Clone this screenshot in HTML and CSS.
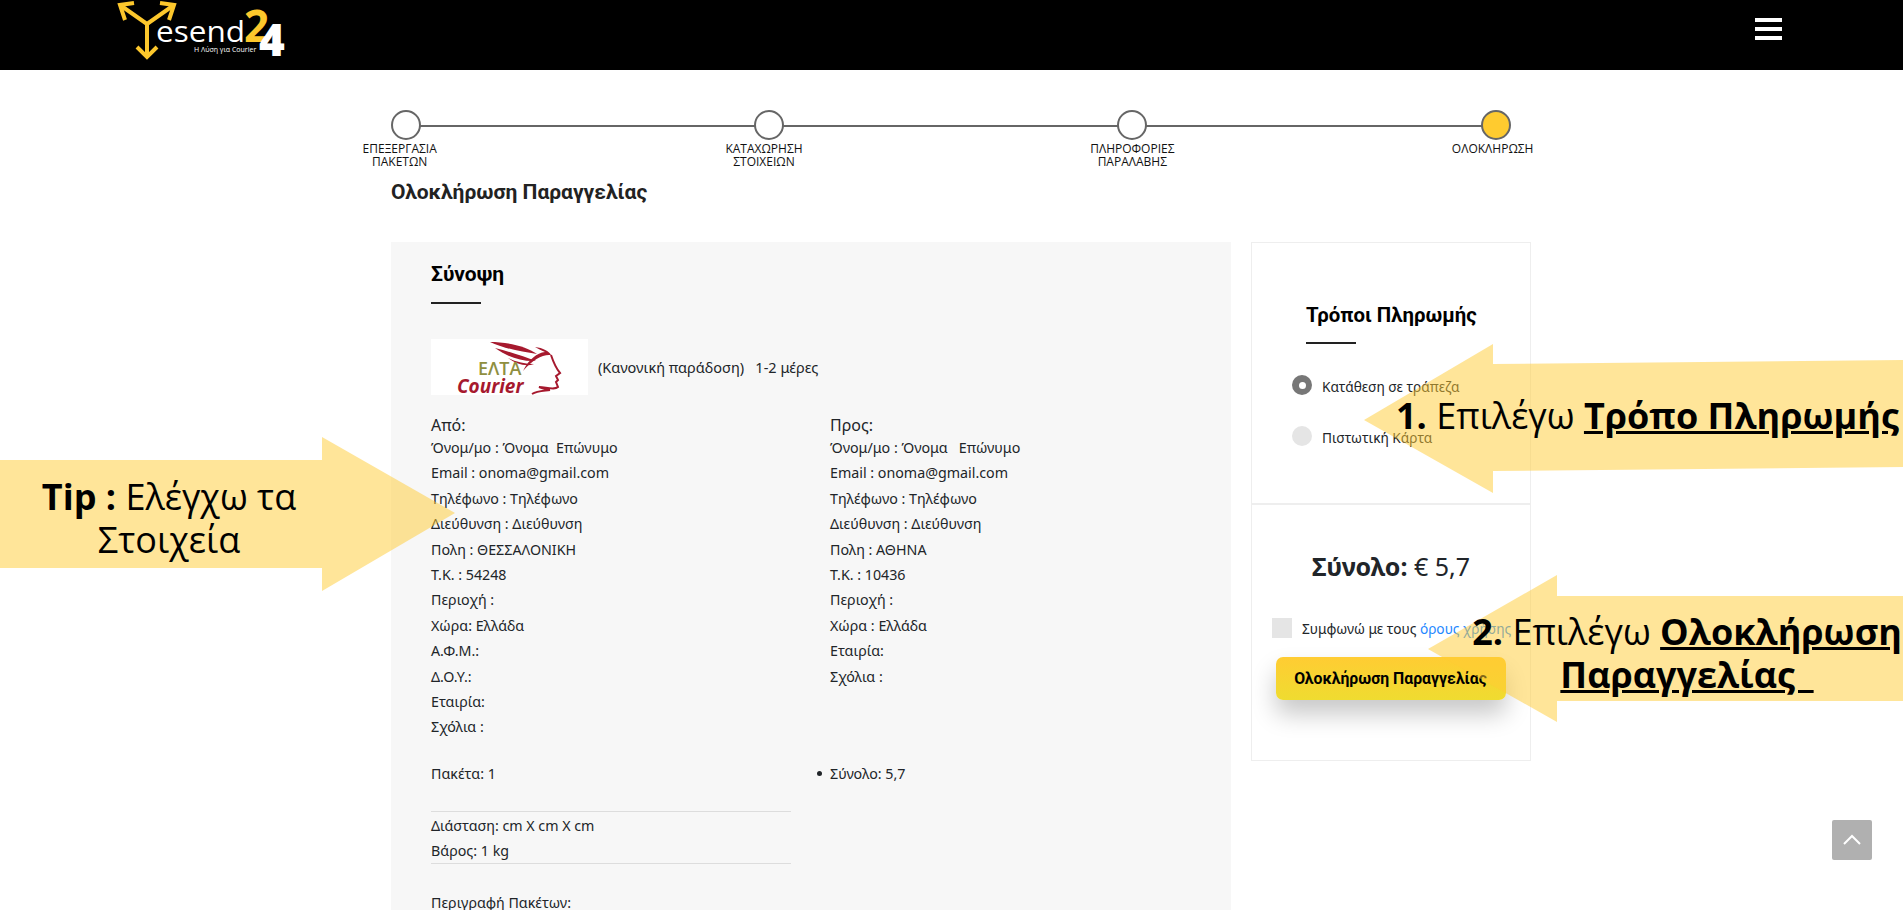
FILE: index.html
```html
<!DOCTYPE html>
<html lang="el">
<head>
  <meta charset="UTF-8">
  <meta name="viewport" content="width=device-width, initial-scale=1">
  <title>Yesend24 - Ολοκλήρωση Παραγγελίας</title>
  <link rel="stylesheet" href="styles.css">
</head>
<body>
  <div class="page">
    <header class="topbar">
      <svg class="logo" width="170" height="62" viewBox="0 0 170 62">
        <g fill="none" stroke="#fcc72c" stroke-width="4" stroke-linejoin="miter">
          <path d="M2 5 L29 24 L56 5"/>
          <path d="M29 24 V57"/>
          <path d="M16 3 L2 5 L7 20"/>
          <path d="M42 3 L56 5 L51 20"/>
          <path d="M19 47 L29 57 L39 47"/>
        </g>
        <text class="logo-esend" x="38" y="42" textLength="89" lengthAdjust="spacingAndGlyphs">esend</text>
        <text class="logo-two" x="126" y="42">2</text>
        <text class="logo-four" x="141" y="56">4</text>
        <text class="logo-tag" x="76" y="52">Η Λύση για Courier</text>
      </svg>
      <div class="burger"><span></span><span></span><span></span></div>
    </header>

    <ol class="stepper">
      <li class="step step-a"><span class="dot"></span><span class="step-label">ΕΠΕΞΕΡΓΑΣΙΑ<br>ΠΑΚΕΤΩΝ</span></li>
      <li class="step step-b"><span class="dot"></span><span class="step-label">ΚΑΤΑΧΩΡΗΣΗ<br>ΣΤΟΙΧΕΙΩΝ</span></li>
      <li class="step"><span class="dot"></span><span class="step-label">ΠΛΗΡΟΦΟΡΙΕΣ<br>ΠΑΡΑΛΑΒΗΣ</span></li>
      <li class="step step-d active"><span class="dot"></span><span class="step-label">ΟΛΟΚΛΗΡΩΣΗ</span></li>
    </ol>

    <div class="content">
      <h1 class="page-title">Ολοκλήρωση Παραγγελίας</h1>

      <div class="columns">
        <section class="summary">
          <h2 class="block-title">Σύνοψη</h2>
          <div class="rule"></div>

          <div class="carrier">
            <svg class="carrier-logo" width="157" height="56" viewBox="0 0 157 56">
              <rect width="157" height="56" fill="#fff"/>
              <path d="M59 3 C75 3 95 7 106 15 C90 13 72 9 59 3Z" fill="#a6192e"/>
              <path d="M64 9 C80 13 94 18 105 22 C90 23 75 17 64 9Z" fill="#a6192e"/>
              <path d="M77 19 C85 23 95 25 103 25 C95 28 85 25 77 19Z" fill="#a6192e"/>
              <path d="M104 8 C112 9 118 12 120 16 C112 15 102 20 92 32 C98 20 106 14 114 13 C110 11 107 10 104 8Z" fill="#a6192e"/>
              <path d="M120 16 C122 22 124 28 129 34 L125 37 L127 41 L125 43 L127 48 C124 51 118 49 108 48 C113 50 116 51 119 51 C112 52 106 52 101 55" fill="none" stroke="#a6192e" stroke-width="2"/>
              <text class="carrier-elta" x="47" y="36">ΕΛΤΑ</text>
              <text class="carrier-courier" x="26" y="54">Courier</text>
            </svg>
            <span class="carrier-text">(Κανονική παράδοση) &nbsp; 1-2 μέρες</span>
          </div>

          <div class="addresses">
            <div>
              <h3 class="addr-title">Από:</h3>
              <p class="row">Όνομ/μο : Όνομα &nbsp;Επώνυμο</p>
              <p class="row">Email : onoma@gmail.com</p>
              <p class="row">Τηλέφωνο : Τηλέφωνο</p>
              <p class="row">Διεύθυνση : Διεύθυνση</p>
              <p class="row">Πολη : ΘΕΣΣΑΛΟΝΙΚΗ</p>
              <p class="row">Τ.Κ. : 54248</p>
              <p class="row">Περιοχή :</p>
              <p class="row">Χώρα: Ελλάδα</p>
              <p class="row">Α.Φ.Μ.:</p>
              <p class="row">Δ.Ο.Υ.:</p>
              <p class="row">Εταιρία:</p>
              <p class="row">Σχόλια :</p>
            </div>
            <div>
              <h3 class="addr-title">Προς:</h3>
              <p class="row">Όνομ/μο : Όνομα &nbsp; Επώνυμο</p>
              <p class="row">Email : onoma@gmail.com</p>
              <p class="row">Τηλέφωνο : Τηλέφωνο</p>
              <p class="row">Διεύθυνση : Διεύθυνση</p>
              <p class="row">Πολη : ΑΘΗΝΑ</p>
              <p class="row">Τ.Κ. : 10436</p>
              <p class="row">Περιοχή :</p>
              <p class="row">Χώρα : Ελλάδα</p>
              <p class="row">Εταιρία:</p>
              <p class="row">Σχόλια :</p>
            </div>
          </div>

          <div class="packages">
            <p class="line">Πακέτα: 1</p>
            <ul class="totals"><li class="line">Σύνολο: 5,7</li></ul>
          </div>

          <div class="package-info">
            <p class="line">Διάσταση: cm X cm X cm</p>
            <p class="line">Βάρος: 1 kg</p>
          </div>

          <p class="line package-desc">Περιγραφή Πακέτων:</p>
        </section>

        <aside class="side">
          <div class="pay">
            <h2 class="block-title">Τρόποι Πληρωμής</h2>
            <div class="rule"></div>
            <div class="options">
              <label class="option"><span class="radio checked"></span><span class="option-text">Κατάθεση σε τράπεζα</span></label>
              <label class="option"><span class="radio"></span><span class="option-text">Πιστωτική Κάρτα</span></label>
            </div>
          </div>
          <div class="checkout">
            <p class="grand"><b>Σύνολο:</b> € 5,7</p>
            <label class="terms"><span class="checkbox"></span><span>Συμφωνώ με τους <a href="#">όρους χρήσης</a></span></label>
            <button class="order-btn" type="button">Ολοκλήρωση Παραγγελίας</button>
          </div>
        </aside>
      </div>
    </div>

    <!-- arrows drawn over the page -->
    <svg class="arrows" width="1903" height="910" viewBox="0 0 1903 910">
      <polygon points="0,460 322,460 322,437 455,513 322,591 322,568 0,568"/>
      <polygon points="1364,420 1493,344 1493,364 1903,360 1903,467 1493,471 1493,493"/>
      <polygon points="1428,649 1557,575 1557,596 1903,596 1903,701 1557,701 1557,722"/>
    </svg>
    <div class="note note-tip"><b>Tip :</b> Ελέγχω τα Στοιχεία</div>
    <div class="note note-pay"><b>1.</b> Επιλέγω <b><u>Τρόπο Πληρωμής</u></b></div>
    <div class="note note-order"><b>2.</b> Επιλέγω <b><u>Ολοκλήρωση Παραγγελίας&nbsp;&nbsp;</u></b></div>

    <a class="to-top" href="#">
      <svg width="20" height="12" viewBox="0 0 20 12"><path d="M2 10 L10 2 L18 10" fill="none" stroke="#fff" stroke-width="2"/></svg>
    </a>
  </div>
</body>
</html>
```

FILE: styles.css
```css
html, body {
  margin: 0;
  padding: 0;
  background-color: #fff;
  color: #212529;
  font-family: 'Noto Sans', 'Open Sans', sans-serif;
  font-size: 14.25px;
}

.page {
  position: relative;
  height: 910px;
  overflow: hidden;
}

p, h1, h2, h3, ul, ol {
  margin: 0;
  padding: 0;
}

/* header */
.topbar {
  display: flex;
  justify-content: space-between;
  align-items: flex-start;
  height: 70px;
  padding: 0 121px 0 118px;
  background-color: #000;
}

.logo {
  display: block;
  overflow: visible;
}

.logo-esend {
  fill: #fff;
  font-family: 'Open Sans', sans-serif;
  font-size: 30px;
  font-weight: 400;
}

.logo-two {
  fill: #fcc72c;
  font-family: 'Open Sans', sans-serif;
  font-size: 44px;
  font-weight: 700;
}

.logo-four {
  fill: #fff;
  font-family: 'Open Sans', sans-serif;
  font-size: 44px;
  font-weight: 800;
}

.logo-tag {
  fill: #fff;
  font-family: 'Open Sans', sans-serif;
  font-size: 7px;
}

.burger {
  display: flex;
  flex-direction: column;
  gap: 5px;
  width: 27px;
  padding-top: 18px;
}

.burger span {
  height: 4px;
  background-color: #fff;
}

/* steps */
.stepper {
  position: relative;
  display: grid;
  grid-template-columns: repeat(4, 363.33px);
  width: 1453.33px;
  margin: 40px 0 0 224px;
  list-style: none;
}

.stepper::before {
  content: '';
  position: absolute;
  top: 15px;
  left: 182px;
  right: 182px;
  height: 2px;
  background-color: #666;
}

.step {
  position: relative;
  display: flex;
  flex-direction: column;
  align-items: center;
  height: 59px;
}

.dot {
  box-sizing: border-box;
  width: 30px;
  height: 30px;
  border: 2px solid #666;
  border-radius: 50%;
  background-color: #fff;
}

.active .dot {
  background-color: #ffcb2f;
}

.step-label {
  margin-top: 2px;
  font-family: 'Open Sans', sans-serif;
  font-size: 12px;
  line-height: 13px;
  text-align: center;
  color: #111;
}

.step-a .step-label { margin-right: 12px; }
.step-b .step-label { margin-right: 10px; }
.step-d .step-label { margin-right: 6px; }

/* content */
.content {
  width: 1140px;
  margin: 10px 0 0 391px;
}

.page-title {
  font-family: Roboto, sans-serif;
  font-size: 21px;
  font-weight: 700;
  line-height: 26px;
  color: #222;
}

.columns {
  display: flex;
  gap: 20px;
  align-items: flex-start;
  margin-top: 37px;
}

.block-title {
  font-family: Roboto, sans-serif;
  font-size: 21px;
  font-weight: 700;
  line-height: 24px;
  color: #000;
}

.rule {
  width: 50px;
  height: 2px;
  margin-top: 15px;
  background-color: #222;
}

.summary {
  box-sizing: border-box;
  width: 840px;
  height: 800px;
  padding: 20px 40px 0;
  background-color: #f7f7f7;
}

.summary .rule {
  margin-top: 16px;
}

.carrier {
  display: flex;
  align-items: center;
  gap: 10px;
  margin-top: 35px;
}

.carrier-logo {
  display: block;
}

.carrier-elta {
  fill: #8f8f3f;
  font-family: 'Open Sans', sans-serif;
  font-size: 18px;
  font-weight: 600;
}

.carrier-courier {
  fill: #a6192e;
  font-family: 'Open Sans', sans-serif;
  font-size: 19px;
  font-style: italic;
  font-weight: 700;
}

.carrier-text {
  font-size: 14.5px;
}

.addresses {
  display: grid;
  grid-template-columns: 399px 1fr;
  margin-top: 21px;
}

.addr-title {
  font-size: 16px;
  font-weight: 400;
  line-height: 19px;
}

.row {
  line-height: 25.4px;
}

.line {
  line-height: 25px;
}

.packages {
  display: grid;
  grid-template-columns: 399px 1fr;
  margin-top: 21px;
}

.totals {
  margin-left: -13px;
  list-style: none;
}

.totals li {
  display: flex;
  align-items: center;
  gap: 8px;
}

.totals li::before {
  content: '';
  width: 5px;
  height: 5px;
  border-radius: 50%;
  background-color: #212529;
}

.package-info {
  width: 360px;
  margin-top: 25px;
  padding-top: 1px;
  border-top: 1px solid #ddd;
  border-bottom: 1px solid #ddd;
}

.package-desc {
  margin-top: 26px;
}

/* right column */
.side {
  box-sizing: border-box;
  width: 280px;
  border: 1px solid #eee;
}

.pay {
  height: 262px;
  padding: 60px 0 0 54px;
  box-sizing: border-box;
  border-bottom: 2px solid #eee;
}

.pay .block-title {
  font-size: 20.4px;
}

.options {
  display: flex;
  flex-direction: column;
  gap: 29px;
  margin: 30px 0 0 -14px;
}

.option {
  display: flex;
  align-items: center;
  gap: 10px;
  font-size: 13.7px;
}

.option-text {
  padding-top: 3px;
}

.radio {
  display: flex;
  align-items: center;
  justify-content: center;
  width: 20px;
  height: 20px;
  border-radius: 50%;
  background-color: #e5e5e5;
}

.radio.checked {
  background-color: #777;
}

.radio.checked::after {
  content: '';
  width: 7px;
  height: 7px;
  border-radius: 50%;
  background-color: #fff;
}

.checkout {
  padding: 45px 0 60px 20px;
}

.grand {
  padding-right: 20px;
  font-size: 25px;
  line-height: 32px;
  text-align: center;
}

.terms {
  display: flex;
  align-items: center;
  gap: 10px;
  margin-top: 36px;
  font-size: 13.7px;
}

.terms a {
  color: #1e88ff;
  text-decoration: none;
}

.checkbox {
  width: 20px;
  height: 20px;
  background-color: #e5e5e5;
}

.order-btn {
  display: block;
  width: 230px;
  height: 43px;
  margin: 19px 0 0 3.5px;
  border: 0;
  border-radius: 7px;
  background: linear-gradient(#ffcc33, #efdc30);
  box-shadow: 0 14px 24px rgba(0, 0, 0, 0.22);
  font-family: Roboto, sans-serif;
  font-size: 15.8px;
  font-weight: 700;
  color: #000;
}

/* overlay arrows and notes */
.arrows {
  position: absolute;
  top: 0;
  left: 0;
  fill: #ffcc33;
  fill-opacity: 0.5;
  pointer-events: none;
}

.note {
  position: absolute;
  font-family: 'Open Sans', sans-serif;
  font-size: 36px;
  line-height: 42.5px;
  text-align: center;
  color: #000;
}

.note-tip {
  top: 476px;
  left: 19px;
  width: 300px;
}

.note-pay {
  top: 395px;
  left: 1396px;
  white-space: nowrap;
}

.note-order {
  top: 611px;
  left: 1440px;
  width: 494px;
}

.to-top {
  position: absolute;
  top: 820px;
  left: 1832px;
  display: flex;
  align-items: center;
  justify-content: center;
  width: 40px;
  height: 40px;
  border-radius: 2px;
  background-color: #b0b0b0;
}
```
